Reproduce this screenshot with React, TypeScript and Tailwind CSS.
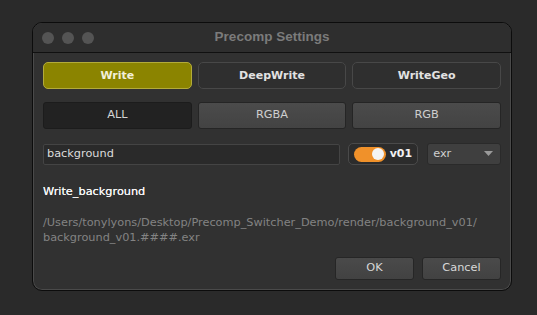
import React, { useState } from 'react';

const font = { fontFamily: '"DejaVu Sans", "Liberation Sans", sans-serif' };

const App: React.FC = () => {
  const [mode, setMode] = useState('Write');
  const [channels, setChannels] = useState('ALL');

  const modes = ['Write', 'DeepWrite', 'WriteGeo'];
  const chans = ['ALL', 'RGBA', 'RGB'];

  return (
    <div className="w-[537px] h-[315px] bg-[#2a2a2a] pt-[22px] pl-[32px] overflow-hidden" style={font}>
      <div className="w-[480px] h-[269px] rounded-[10px] border border-[#0c0c0c] bg-[#313131] shadow-[inset_0_0_0_1px_#4a4a4a] flex flex-col overflow-hidden">
        {/* Title bar */}
        <div className="relative h-[30px] flex items-center justify-center border-b border-[#101010] bg-[#2e2e2e]">
          <div className="absolute left-[9px] top-[9px] flex gap-[8px]">
            <span className="w-[12px] h-[12px] rounded-full bg-[#545454]" />
            <span className="w-[12px] h-[12px] rounded-full bg-[#545454]" />
            <span className="w-[12px] h-[12px] rounded-full bg-[#545454]" />
          </div>
          <span className="text-[13.5px] font-bold text-[#7b7b7b]" style={{ fontFamily: '"Liberation Sans", sans-serif' }}>
            Precomp Settings
          </span>
        </div>

        <div className="flex flex-col px-[10px] pt-[9px]">
          {/* Node type */}
          <div className="grid grid-cols-3 gap-[6px]">
            {modes.map((m) => (
              <button
                key={m}
                onClick={() => setMode(m)}
                className={`h-[27px] pt-[2px] rounded-[5px] border text-[11px] font-bold ${
                  mode === m
                    ? 'bg-[#8b8400] border-[#b3ab3a] text-[#f2efd8]'
                    : 'bg-[#2f2f2f] border-[#484848] text-[#e2e2e2]'
                }`}
              >
                {m}
              </button>
            ))}
          </div>

          {/* Channels */}
          <div className="grid grid-cols-3 gap-[6px] mt-[13px]">
            {chans.map((c) => (
              <button
                key={c}
                onClick={() => setChannels(c)}
                className={`h-[27px] rounded-[3px] border text-[11.3px] ${
                  channels === c
                    ? 'bg-[#222222] border-[#1c1c1c] text-[#d4d4d4]'
                    : 'bg-gradient-to-b from-[#4b4b4b] to-[#434343] border-[#252525] text-[#cfcfcf]'
                }`}
              >
                {c}
              </button>
            ))}
          </div>

          {/* Name / version / format */}
          <div className="flex items-center mt-[14px] h-[22px]">
            <div className="w-[298px] h-[21px] rounded-[2px] bg-[#2a2a2a] border border-[#444444] flex items-center px-[3px] text-[11.3px] text-[#dcdcdc]">
              background
            </div>
            <div className="ml-[8px] w-[70px] h-[22px] rounded-[5px] border border-[#4a4a4a] bg-[#2c2c2c] flex items-center px-[5px] gap-[4px]">
              <div className="w-[32px] h-[15px] rounded-full bg-[#f0912a] flex items-center justify-end pr-[2px]">
                <span className="w-[12px] h-[12px] rounded-full bg-[#f4f4f4]" />
              </div>
              <span className="text-[11px] font-bold text-[#f2f2f2]">v01</span>
            </div>
            <div className="ml-[9px] w-[74px] h-[22px] rounded-[3px] bg-[#3f3f3f] border border-[#2a2a2a] flex items-center justify-between px-[5px] text-[11.3px] text-[#cfcfcf]">
              <span>exr</span>
              <svg width="9" height="6" viewBox="0 0 9 6" className="mr-[2px]">
                <path d="M0 0 L9 0 L4.5 5 Z" fill="#9a9a9a" />
              </svg>
            </div>
          </div>

          <div className="mt-[19px] text-[11.3px] text-[#f4f4f4] [text-shadow:0_0_0.4px_#ffffff]">Write_background</div>

          <div className="mt-[14px] text-[11.3px] leading-[15px] text-[#838383]">
            /Users/tonylyons/Desktop/Precomp_Switcher_Demo/render/background_v01/
            <br />
            background_v01.####.exr
          </div>

          <div className="flex justify-end gap-[8px] mt-[12px]">
            <button className="w-[79px] h-[23px] rounded-[3px] bg-gradient-to-b from-[#4a4a4a] to-[#424242] border border-[#262626] text-[11.3px] text-[#d8d8d8]">
              OK
            </button>
            <button className="w-[79px] h-[23px] rounded-[3px] bg-gradient-to-b from-[#4a4a4a] to-[#424242] border border-[#262626] text-[11.3px] text-[#d8d8d8]">
              Cancel
            </button>
          </div>
        </div>
      </div>
    </div>
  );
};

export default App;
